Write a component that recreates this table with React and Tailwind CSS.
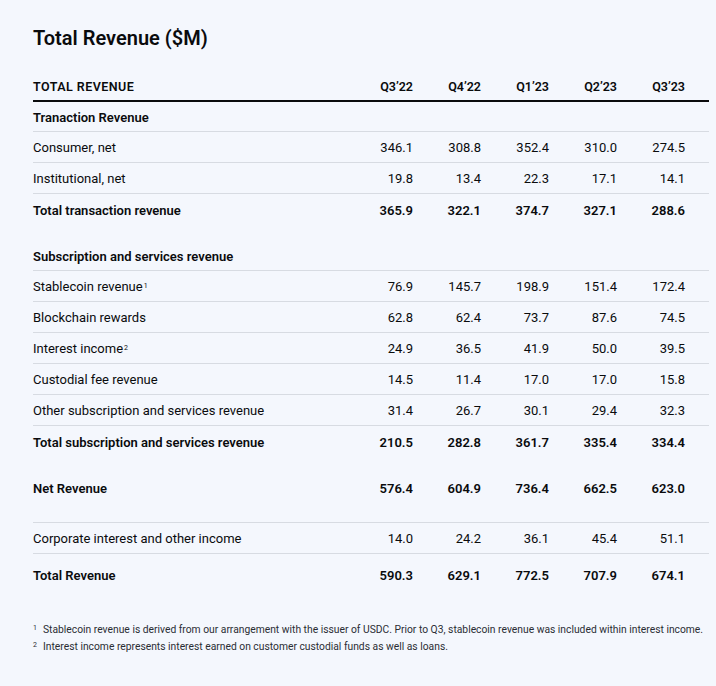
const cols = ["Q3’22", "Q4’22", "Q1’23", "Q2’23", "Q3’23"];

const sections = [
  {
    title: "Tranaction Revenue",
    rows: [
      ["Consumer, net", ["346.1", "308.8", "352.4", "310.0", "274.5"]],
      ["Institutional, net", ["19.8", "13.4", "22.3", "17.1", "14.1"]],
    ],
    total: ["Total transaction revenue", ["365.9", "322.1", "374.7", "327.1", "288.6"]],
  },
  {
    title: "Subscription and services revenue",
    rows: [
      ["Stablecoin revenue", ["76.9", "145.7", "198.9", "151.4", "172.4"], "1"],
      ["Blockchain rewards", ["62.8", "62.4", "73.7", "87.6", "74.5"]],
      ["Interest income", ["24.9", "36.5", "41.9", "50.0", "39.5"], "2"],
      ["Custodial fee revenue", ["14.5", "11.4", "17.0", "17.0", "15.8"]],
      ["Other subscription and services revenue", ["31.4", "26.7", "30.1", "29.4", "32.3"]],
    ],
    total: ["Total subscription and services revenue", ["210.5", "282.8", "361.7", "335.4", "334.4"]],
  },
];

function Row({ label, values, bold, sup, className = "" }) {
  return (
    <div className={`flex items-center h-[31px] pt-[2px] ${bold ? "font-semibold" : ""} ${className}`}>
      <div className="flex-1">
        {label}
        {sup && <sup className="text-[7px] ml-px">{sup}</sup>}
      </div>
      {values.map((v, i) => (
        <div key={i} className="w-[68px] text-right">
          {v}
        </div>
      ))}
      <div className="w-[24px]" />
    </div>
  );
}

export default function App() {
  return (
    <div
      className="min-h-[686px] bg-[#f4f7fd] text-[#0a0b0d] pl-[33px] pr-[7px] pt-[26px]"
      style={{ fontFamily: "Roboto, Inter, sans-serif" }}
    >
      <h1 className="text-[20px] font-semibold leading-[24px]">Total Revenue ($M)</h1>

      <div className="mt-[22px] text-[13px]">
        <div className="flex items-center h-[30px] pt-[2px] border-b-2 border-[#0a0b0d] text-[12.5px] font-semibold">
          <div className="flex-1 tracking-[0.45px]">TOTAL REVENUE</div>
          {cols.map((c) => (
            <div key={c} className="w-[68px] text-right">
              {c}
            </div>
          ))}
          <div className="w-[24px]" />
        </div>

        {sections.map((s, si) => (
          <div key={si} className={si > 0 ? "mt-[16px]" : ""}>
            <div className="flex items-center h-[30px] pt-[2px] border-b border-[#d7dbe2] font-semibold">{s.title}</div>
            {s.rows.map(([label, values, sup]) => (
              <Row key={label} label={label} values={values} sup={sup} className="border-b border-[#d7dbe2]" />
            ))}
            <Row label={s.total[0]} values={s.total[1]} bold />
          </div>
        ))}

        <div className="border-b border-[#d7dbe2] pt-[15px] pb-[19px]">
          <Row label="Net Revenue" values={["576.4", "604.9", "736.4", "662.5", "623.0"]} bold />
        </div>
        <Row
          label="Corporate interest and other income"
          values={["14.0", "24.2", "36.1", "45.4", "51.1"]}
          className="border-b border-[#d7dbe2]"
        />
        <Row label="Total Revenue" values={["590.3", "629.1", "772.5", "707.9", "674.1"]} bold className="h-[41px]" />
      </div>

      <div className="mt-[29px] text-[10.3px] leading-[12px] text-[#2a2d34] flex flex-col gap-[5px] whitespace-nowrap">
        <div className="flex">
          <span className="w-[10px] text-[7px] leading-[9px]">1</span>
          <span>
            Stablecoin revenue is derived from our arrangement with the issuer of USDC. Prior to Q3, stablecoin revenue was
            included within interest income.
          </span>
        </div>
        <div className="flex">
          <span className="w-[10px] text-[7px] leading-[9px]">2</span>
          <span>Interest income represents interest earned on customer custodial funds as well as loans.</span>
        </div>
      </div>
    </div>
  );
}
